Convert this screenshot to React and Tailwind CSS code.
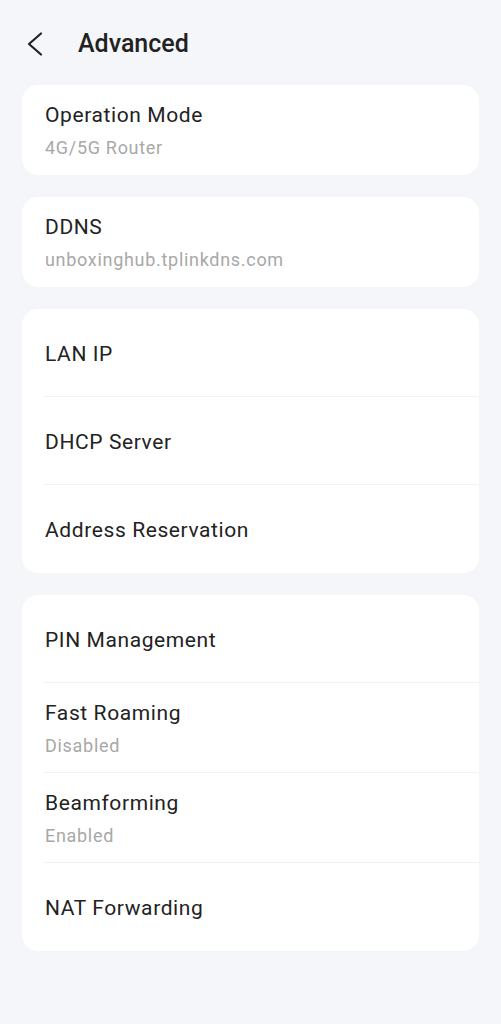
import React from "react";

function Row({ title, sub, divider }) {
    return (
        <div className={`relative flex flex-col justify-center pl-[23px] pr-4 ${sub ? "h-[90px] gap-[9px] pt-px" : "h-[88px] pt-px"}`}>
            <div className="text-[21px] leading-[26px] tracking-[0.6px] text-[#222222]">{title}</div>
            {sub && <div className="text-[18px] leading-[22px] tracking-[0.7px] text-[#a8a8a8]">{sub}</div>}
            {divider && <div className="absolute bottom-0 left-[22px] right-0 h-px bg-[#f1f2f4]" />}
        </div>
    );
}

function Card({ items }) {
    return (
        <div className="rounded-[16px] bg-white overflow-hidden">
            {items.map((it, i) => (
                <Row key={it.title} title={it.title} sub={it.sub} divider={i < items.length - 1} />
            ))}
        </div>
    );
}

export default function App() {
    return (
        <div className="min-h-[1024px] bg-[#f4f6fa] font-['Roboto',sans-serif]">
            <div className="flex h-[85px] items-center pl-[25px] pt-[2px]">
                <svg width="18" height="26" viewBox="0 0 18 26" fill="none" className="shrink-0">
                    <path d="M16 2.5 L4 13 L16 23.5" stroke="#222222" strokeWidth="2.2" strokeLinecap="round" strokeLinejoin="round" />
                </svg>
                <div className="ml-[35px] text-[25px] font-medium text-[#222222]">Advanced</div>
            </div>
            <div className="flex flex-col gap-[22px] px-[22px]">
                <Card items={[{ title: "Operation Mode", sub: "4G/5G Router" }]} />
                <Card items={[{ title: "DDNS", sub: "unboxinghub.tplinkdns.com" }]} />
                <Card items={[{ title: "LAN IP" }, { title: "DHCP Server" }, { title: "Address Reservation" }]} />
                <Card
                    items={[
                        { title: "PIN Management" },
                        { title: "Fast Roaming", sub: "Disabled" },
                        { title: "Beamforming", sub: "Enabled" },
                        { title: "NAT Forwarding" },
                    ]}
                />
            </div>
        </div>
    );
}
